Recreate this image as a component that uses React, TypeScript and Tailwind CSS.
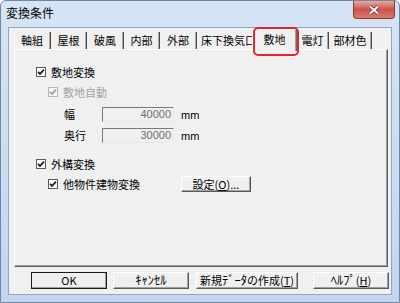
import { ReactNode } from "react";

const font = "font-['Noto_Sans_CJK_JP','Noto_Sans',sans-serif]";

const tabs = [
  { label: "軸組", w: "w-[37px]" },
  { label: "屋根", w: "w-[36px]" },
  { label: "破風", w: "w-[37px]" },
  { label: "内部", w: "w-[36px]" },
  { label: "外部", w: "w-[37px]" },
  { label: "床下換気口", w: "w-[58px]", clip: true },
  { label: "敷地", w: "w-[45px]", active: true },
  { label: "電灯", w: "w-[32px]" },
  { label: "部材色", w: "w-[43px]" },
];

function Check({ disabled }: { disabled?: boolean }) {
  return (
    <span
      className={
        disabled
          ? "flex h-[10px] w-[10px] shrink-0 items-center justify-center border border-[#b4b4b4] bg-[#f7f7f7]"
          : "flex h-[10px] w-[10px] shrink-0 items-center justify-center border border-[#5a5a5a] bg-white"
      }
    >
      <svg width="8" height="8" viewBox="0 0 8 8">
        <path
          d="M1 3.8 L3 5.9 L7 1.6"
          fill="none"
          stroke={disabled ? "#a2a2a2" : "#1e1e1e"}
          strokeWidth="1.7"
        />
      </svg>
    </span>
  );
}

function Btn({
  children,
  className,
  isDefault,
}: {
  children: ReactNode;
  className: string;
  isDefault?: boolean;
}) {
  return (
    <div
      className={
        (isDefault
          ? "border border-[#1a1a1a] "
          : "border border-t-white border-l-white border-r-[#5a5a5a] border-b-[#5a5a5a] ") +
        "flex items-center justify-center whitespace-nowrap bg-[#f0f0f0] text-[11px] leading-none text-black shadow-[inset_-1px_-1px_0_#a0a0a0] " +
        className
      }
    >
      {children}
    </div>
  );
}

// half-width katakana render small in Noto, bump them up a little
function Kana({ children }: { children: ReactNode }) {
  return <span className="text-[12.5px] leading-none">{children}</span>;
}

function Field({ value }: { value: string }) {
  return (
    <div className="flex h-[15px] w-[72px] items-center justify-end border border-t-[#7a7a7a] border-l-[#7a7a7a] border-r-[#e8e8e8] border-b-[#e8e8e8] bg-[#f0f0f0] pr-[2px] font-['Liberation_Sans',sans-serif] text-[11px] leading-none text-[#6d6d6d]">
      {value}
    </div>
  );
}

export default function App() {
  return (
    <div className={`h-[303px] w-[400px] bg-white ${font}`}>
      <div className="flex h-[303px] w-[400px] flex-col rounded-t-[6px] border border-[#6f87a6] bg-gradient-to-b from-[#d6e4f5] to-[#c2d6ee]">
        {/* title bar */}
        <div className="flex h-[26px] items-start justify-between">
          <span className="pl-[5px] pt-[6px] text-[12px] leading-none text-black">変換条件</span>
          <div className="mr-[4px] flex h-[18px] w-[42px] items-center justify-center rounded-b-[4px] border border-t-0 border-[#8a3a33] bg-gradient-to-b from-[#e8a99f] via-[#c9554a] to-[#d87b6c]">
            <svg width="12" height="10" viewBox="0 0 12 10">
              <path d="M2 1.5 L10 8.5 M10 1.5 L2 8.5" stroke="#6b2a24" strokeWidth="3.4" />
              <path d="M2 1.5 L10 8.5 M10 1.5 L2 8.5" stroke="white" strokeWidth="2" />
            </svg>
          </div>
        </div>

        {/* client */}
        <div className="mx-[7px] flex h-[268px] flex-col border border-[#90a6c2] bg-[#f0f0f0]">
          {/* tab strip */}
          <div className="flex h-[21px] items-end pl-[5px] text-[11px] leading-none text-black">
            {tabs.map((t) =>
              t.active ? (
                <div
                  key={t.label}
                  className={`relative z-10 -mb-[2px] -ml-[3px] flex h-[22px] ${t.w} shrink-0 items-start justify-center border-l border-t border-r border-l-white border-t-white border-r-[#6a6a6a] bg-[#f0f0f0] pt-[4px] shadow-[inset_-1px_0_0_#a0a0a0,inset_1px_0_0_#d8d8d8]`}
                >
                  {t.label}
                  <div className="absolute -bottom-[5px] -right-[3px] -top-[3px] left-0 rounded-[5px] border-2 border-[#e0262b]" />
                </div>
              ) : (
                <div
                  key={t.label}
                  className={
                    t.clip
                      ? `flex h-[17px] ${t.w} shrink-0 items-center justify-start overflow-hidden whitespace-nowrap pl-[4px]`
                      : `flex h-[17px] ${t.w} shrink-0 items-center justify-center overflow-hidden whitespace-nowrap border-r border-r-[#4a4a4a] shadow-[inset_-1px_0_0_#a8a8a8]`
                  }
                >
                  {t.label}
                </div>
              )
            )}
          </div>

          {/* panel */}
          <div className="ml-[5px] flex h-[218px] w-[374px] flex-col border border-t-white border-l-white border-r-[#5f5f5f] border-b-[#5f5f5f] bg-[#f0f0f0] text-[11px] leading-none text-black shadow-[inset_-1px_-1px_0_#a0a0a0]">
            <div className="mt-[14px] flex h-[16px] items-center gap-[5px] pl-[21px]">
              <Check />
              <span>敷地変換</span>
            </div>
            <div className="mt-[4px] flex h-[16px] items-center gap-[5px] pl-[33px] text-[#a0a0a0]">
              <Check disabled />
              <span>敷地自動</span>
            </div>
            <div className="mt-[6px] flex h-[16px] items-center pl-[49px]">
              <span className="w-[38px]">幅</span>
              <Field value="40000" />
              <span className="ml-[7px] self-end pb-[1px] font-['Liberation_Sans',sans-serif]">mm</span>
            </div>
            <div className="mt-[5px] flex h-[16px] items-center pl-[49px]">
              <span className="w-[38px]">奥行</span>
              <Field value="30000" />
              <span className="ml-[7px] self-end pb-[1px] font-['Liberation_Sans',sans-serif]">mm</span>
            </div>
            <div className="mt-[13px] flex h-[16px] items-center gap-[5px] pl-[21px]">
              <Check />
              <span>外構変換</span>
            </div>
            <div className="mt-[4px] flex h-[16px] items-center pl-[33px]">
              <Check />
              <span className="ml-[5px] w-[118px]">他物件建物変換</span>
              <Btn className="h-[16px] w-[70px]">
                設定(<span className="underline">O</span>)...
              </Btn>
            </div>
          </div>

          {/* buttons */}
          <div className="mt-[5px] flex h-[17px] pl-[22px]">
            <Btn isDefault className="h-[17px] w-[76px]">
              OK
            </Btn>
            <Btn className="ml-[6px] h-[17px] w-[76px]">
              <Kana>ｷｬﾝｾﾙ</Kana>
            </Btn>
            <Btn className="ml-[7px] h-[17px] w-[102px]">
              新規<Kana>ﾃﾞｰﾀ</Kana>の作成(<span className="underline">T</span>)
            </Btn>
            <Btn className="ml-[15px] h-[17px] w-[76px]">
              <Kana>ﾍﾙﾌﾟ</Kana>(<span className="underline">H</span>)
            </Btn>
          </div>
        </div>
      </div>
    </div>
  );
}
